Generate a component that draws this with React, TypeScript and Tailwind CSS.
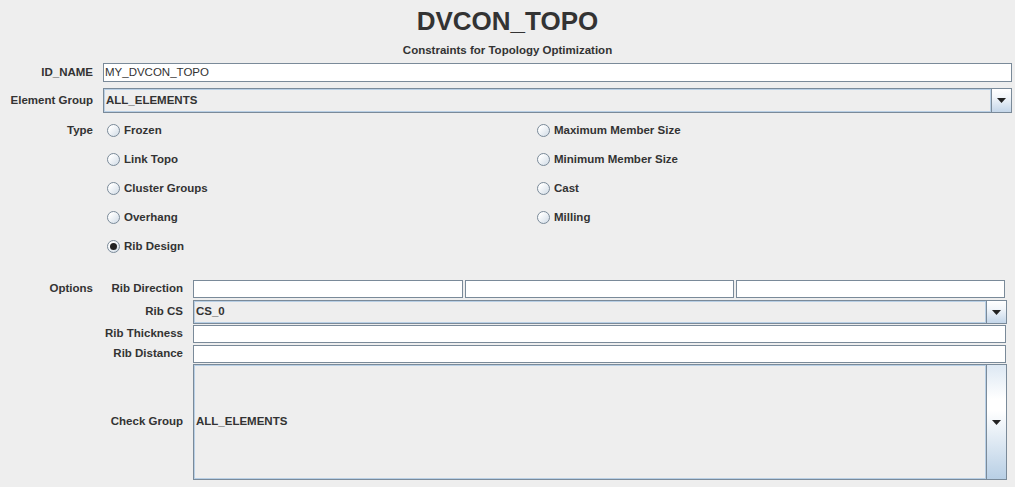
import React from "react";

const font = { fontFamily: '"Liberation Sans", Arial, sans-serif' };

function Arrow() {
  return (
    <svg width="9" height="5" viewBox="0 0 9 5">
      <polygon points="0,0 9,0 4.5,5" fill="#222" />
    </svg>
  );
}

function ComboButton({ tall }: { tall?: boolean }) {
  return (
    <div
      className={
        "flex w-[20px] shrink-0 items-center justify-center border-l border-[#7a8a99] " +
        (tall
          ? "bg-[linear-gradient(to_bottom,#dde8f3_0%,#ffffff_30%,#ffffff_40%,#b8cfe5_100%)]"
          : "bg-[linear-gradient(to_bottom,#ffffff_0%,#f2f6fa_35%,#c4d6e9_100%)]")
      }
    >
      <Arrow />
    </div>
  );
}

function Combo({ value, className }: { value: string; className: string }) {
  return (
    <div className={"flex border border-[#7a8a99] bg-[#eeeeee] " + className}>
      <div className="flex flex-1 items-center pl-[2px] text-[11.5px] font-bold text-[#333333] shadow-[inset_1px_1px_0_#b8cfe5,inset_-1px_-1px_0_#b8cfe5]">
        {value}
      </div>
      <ComboButton />
    </div>
  );
}

function TextField({ value, className }: { value?: string; className: string }) {
  return (
    <div
      className={
        "flex items-center border border-[#7a8a99] bg-white pl-[1px] text-[11.5px] text-[#333333] " +
        className
      }
    >
      {value}
    </div>
  );
}

function Radio({ label, checked }: { label: string; checked?: boolean }) {
  return (
    <div className="flex h-[29px] items-center">
      <div className="ml-[4px] flex h-[13px] w-[13px] items-center justify-center rounded-full border border-[#7a8a99] bg-[linear-gradient(135deg,#ffffff_20%,#d0dbe6_100%)]">
        {checked && <div className="h-[7px] w-[7px] rounded-full bg-[#222222]" />}
      </div>
      <span className="ml-[4px] text-[11.5px] font-bold text-[#333333]">{label}</span>
    </div>
  );
}

export default function App() {
  return (
    <div className="h-[487px] w-[1015px] overflow-hidden bg-[#eeeeee] text-[#333333]" style={font}>
      <div className="mt-[6px] h-[30px] text-center text-[26px] font-bold leading-[30px]">DVCON_TOPO</div>
      <div className="mt-[7px] text-center text-[11.5px] font-bold leading-[14px]">
        Constraints for Topology Optimization
      </div>

      <div className="mt-[6px] flex h-[19px] items-center">
        <div className="w-[93px] text-right text-[11.5px] font-bold">ID_NAME</div>
        <TextField value="MY_DVCON_TOPO" className="ml-[10px] h-[19px] w-[909px]" />
      </div>

      <div className="mt-[6px] flex h-[25px] items-center">
        <div className="w-[93px] text-right text-[11.5px] font-bold">Element Group</div>
        <Combo value="ALL_ELEMENTS" className="ml-[10px] h-[25px] w-[909px]" />
      </div>

      <div className="mt-[3px] flex">
        <div className="flex h-[29px] w-[93px] items-center justify-end text-[11.5px] font-bold">Type</div>
        <div className="ml-[10px] flex">
          <div className="flex w-[430px] flex-col">
            <Radio label="Frozen" />
            <Radio label="Link Topo" />
            <Radio label="Cluster Groups" />
            <Radio label="Overhang" />
            <Radio label="Rib Design" checked />
          </div>
          <div className="flex flex-col">
            <Radio label="Maximum Member Size" />
            <Radio label="Minimum Member Size" />
            <Radio label="Cast" />
            <Radio label="Milling" />
          </div>
        </div>
      </div>

      <div className="mt-[19px] flex">
        <div className="flex h-[18px] w-[93px] items-center justify-end text-[11.5px] font-bold">Options</div>
        <div className="flex flex-col text-[11.5px] font-bold">
          <div className="flex h-[18px] items-center">
            <div className="w-[90px] text-right">Rib Direction</div>
            <div className="ml-[10px] flex gap-[2px]">
              <TextField className="h-[18px] w-[270px]" />
              <TextField className="h-[18px] w-[269px]" />
              <TextField className="h-[18px] w-[269px]" />
            </div>
          </div>
          <div className="mt-[2px] flex h-[24px] items-center">
            <div className="w-[90px] text-right">Rib CS</div>
            <Combo value="CS_0" className="ml-[10px] h-[24px] w-[814px]" />
          </div>
          <div className="mt-[1px] flex h-[18px] items-center">
            <div className="w-[90px] text-right">Rib Thickness</div>
            <TextField className="ml-[10px] h-[18px] w-[813px]" />
          </div>
          <div className="mt-[2px] flex h-[18px] items-center">
            <div className="w-[90px] text-right">Rib Distance</div>
            <TextField className="ml-[10px] h-[18px] w-[813px]" />
          </div>
          <div className="mt-[1px] flex h-[116px] items-center">
            <div className="w-[90px] text-right">Check Group</div>
            <div className="ml-[10px] flex h-[116px] w-[814px] border border-[#7a8a99] bg-[#eeeeee]">
              <div className="flex flex-1 items-center pl-[2px] shadow-[inset_1px_1px_0_#b8cfe5,inset_-1px_-1px_0_#b8cfe5]">
                ALL_ELEMENTS
              </div>
              <ComboButton tall />
            </div>
          </div>
        </div>
      </div>
    </div>
  );
}
